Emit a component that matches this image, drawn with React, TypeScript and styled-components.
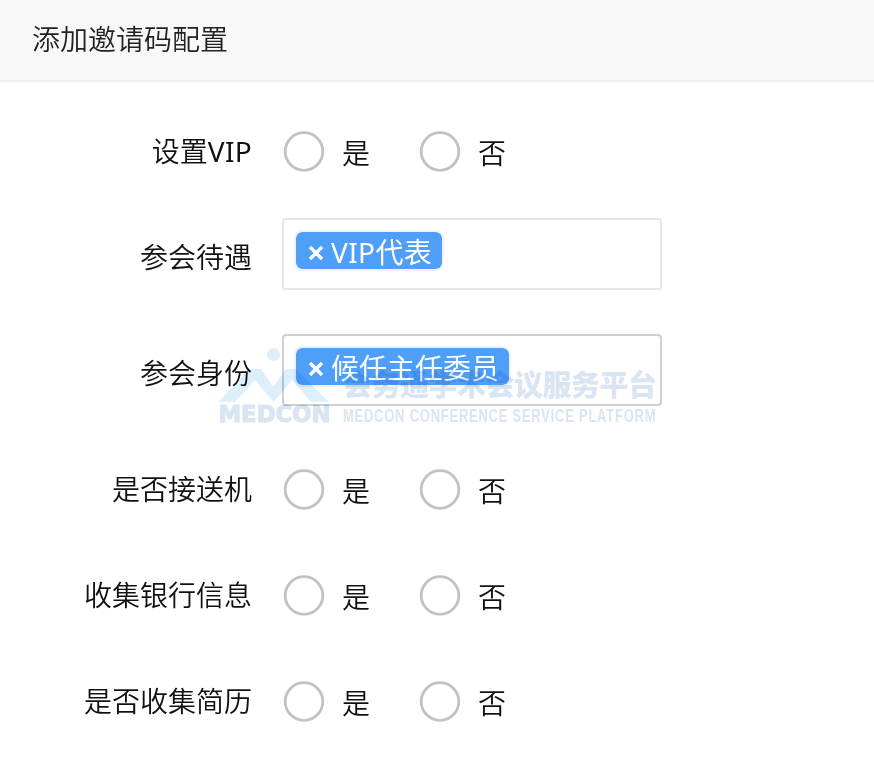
import React from "react";
import styled, { createGlobalStyle } from "styled-components";

const Global = createGlobalStyle`
  * { box-sizing: border-box; }
  body { margin: 0; background: #fff; font: 28px/40px "Noto Sans", "Noto Sans CJK SC", sans-serif; font-weight: 350; color: #111; }
`;
const Page = styled.main`
  position: relative;
  width: 874px;
  height: 771px;
  overflow: hidden;
`;
const Header = styled.header`
  height: 82px;
  padding: 19px 32px;
  background: #f8f8f8;
  border-bottom: 2px solid #eee;
  color: #222;
`;
const Form = styled.form`padding-top: 34px;`;
const Row = styled.div<{ $gap: number }>`
  display: flex;
  height: 70px;
  align-items: center;
  margin-bottom: ${(p) => p.$gap}px;
`;
const Label = styled.span<{ $drop?: number }>`
  width: 252px;
  text-align: right;
  white-space: nowrap;
  margin-top: ${(p) => p.$drop ?? 0}px;
`;
const Latin = styled.span`
  font-weight: 400;
  letter-spacing: 0.3px;
`;
const Radios = styled.div`display: flex; margin-left: 31px;`;
const Radio = styled.label`
  display: flex;
  align-items: center;
  width: 136px;
`;
const Ring = styled.svg`
  width: 42px;
  height: 42px;
  margin: 1px 17px 0 0;
`;
const RadioText = styled.span`padding-top: 4px;`;
const Select = styled.div<{ $focus?: boolean }>`
  display: flex;
  align-items: flex-start;
  width: 380px;
  height: 72px;
  margin-left: 30px;
  padding: 10px;
  border: 2px solid ${(p) => (p.$focus ? "#d0d0d0" : "#e6e6e6")};
  border-radius: 4px;
`;
const Tag = styled.span`
  display: inline-flex;
  align-items: center;
  height: 41px;
  padding: 0 10px 0 13px;
  border: 2px solid #f0f2f5;
  border-radius: 8px;
  background: #4f9ff9;
  background-clip: padding-box;
  color: #fff;
  font-weight: 400;
  white-space: nowrap;
`;
const TagText = styled.span<{ $spaced: boolean }>`
  padding-top: 2px;
  letter-spacing: ${(p) => (p.$spaced ? "0.4px" : "0")};
`;
const Cross = styled.svg`width: 14px; height: 14px; margin: 5px 8px 0 0;`;
const Watermark = styled.svg`
  position: absolute;
  left: 212px;
  top: 342px;
  mix-blend-mode: multiply;
  pointer-events: none;
`;

const YesNo = () => (
  <Radios>
    {["是", "否"].map((t) => (
      <Radio key={t}>
        <Ring viewBox="0 0 42 42"><circle cx="21" cy="20.500" r="18.8" fill="none" stroke="#c2c2c2" strokeWidth="2.8" /></Ring>
        <RadioText>{t}</RadioText>
      </Radio>
    ))}
  </Radios>
);
const Chosen = ({ text, focus }: { text: string; focus?: boolean }) => (
  <Select $focus={focus}>
    <Tag>
      <Cross viewBox="0 0 14 14"><path d="M1 1L13 13M13 1L1 13" stroke="#fff" strokeWidth="3.4" /></Cross>
      <TagText $spaced={text.startsWith("VIP")}>{text}</TagText>
    </Tag>
  </Select>
);

const rows = [
  { label: "设置", latin: "VIP", gap: 33 },
  { label: "参会待遇", gap: 46, tag: "VIP代表" },
  { label: "参会身份", gap: 49, tag: "候任主任委员", focus: true },
  { label: "是否接送机", gap: 36 },
  { label: "收集银行信息", gap: 36 },
  { label: "是否收集简历", gap: 0 },
];

export default function App() {
  return (
    <Page>
      <Global />
      <Header>添加邀请码配置</Header>
      <Form>
        {rows.map((r) => (
          <Row key={r.label} $gap={r.gap}>
            <Label $drop={r.tag ? 6 : 0}>{r.label}{r.latin && <Latin>{r.latin}</Latin>}</Label>
            {r.tag ? <Chosen text={r.tag} focus={r.focus} /> : <YesNo />}
          </Row>
        ))}
      </Form>
      <Watermark width="450" height="86">
        <circle cx="61.5" cy="12.5" r="6.5" fill="#dceffb" />
        <path d="M6 60L38 27H49L61.500 45L74 27H84L117 60H99L80 38L61.500 60L43 38L23 60Z" fill="#dceffb" />
        <g fill="#d9e5f3" stroke="#d9e5f3">
          <text x="6.500" y="79.500" fontFamily="DejaVu Sans" fontWeight="700" fontSize="22.500" strokeWidth="1.2" textLength="112" lengthAdjust="spacingAndGlyphs">MEDCON</text>
          <text x="131" y="54" fontFamily="Noto Sans CJK SC" fontWeight="900" fontSize="29" strokeWidth="0" textLength="314">会务通学术会议服务平台</text>
          <text transform="translate(131 80) scale(.72 1)" fontFamily="Liberation Sans" fontWeight="700" fontSize="18" strokeWidth="0" textLength="434">MEDCON CONFERENCE SERVICE PLATFORM</text>
        </g>
      </Watermark>
    </Page>
  );
}
